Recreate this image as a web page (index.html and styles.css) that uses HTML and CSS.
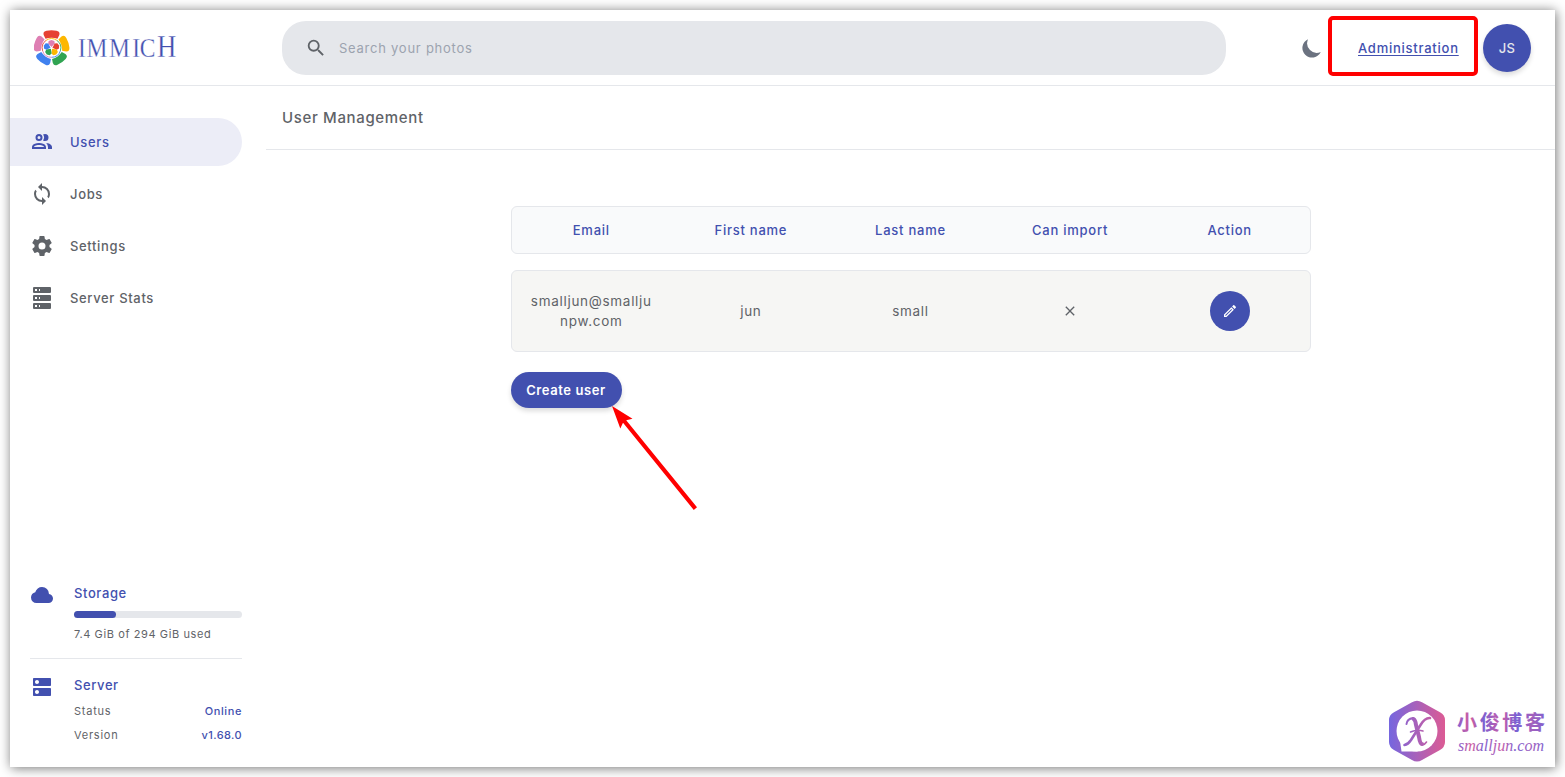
FILE: index.html
```
<!DOCTYPE html>
<html lang="en">
<head>
    <meta charset="UTF-8">
    <meta name="viewport" content="width=device-width, initial-scale=1.0">
    <title>User Management - Immich</title>
    <link rel="stylesheet" href="styles.css">
</head>
<body>
    <div class="window">
        <header class="navbar">
            <a class="brand">
                <svg class="brand-logo" viewBox="0 0 36 36">
                    <defs>
                        <path id="petal" d="M-6 -9.2 L-7.8 -13 Q-8.8 -16.4 -5 -17.2 Q0 -18.2 5 -17.2 Q8.8 -16.4 7.8 -13 L6 -9.2 Q0 -11.4 -6 -9.2Z"/>
                        <path id="bud" d="M0 -1 L-3.3 -4.4 L-2.8 -7 L0 -8 L2.8 -7 L3.3 -4.4Z"/>
                    </defs>
                    <g transform="translate(17.5 18)">
                        <use href="#petal" fill="#e64132"/>
                        <use href="#petal" fill="#fdb700" transform="rotate(72)"/>
                        <use href="#petal" fill="#31a452" transform="rotate(144)"/>
                        <use href="#petal" fill="#4081ef" transform="rotate(216)"/>
                        <use href="#petal" fill="#de7fb3" transform="rotate(288)"/>
                        <g fill="none" stroke-width="0.9">
                            <path stroke="#fdb700" d="M-5.4 -7.6A9.3 9.3 0 0 1 5.4 -7.6"/>
                            <path stroke="#31a452" d="M5.4 -7.6A9.3 9.3 0 0 1 8.9 2.8"/>
                            <path stroke="#4081ef" d="M8.9 2.8A9.3 9.3 0 0 1 0 9.3"/>
                            <path stroke="#de7fb3" d="M0 9.3A9.3 9.3 0 0 1 -8.9 2.8"/>
                            <path stroke="#e64132" d="M-8.9 2.8A9.3 9.3 0 0 1 -5.4 -7.6"/>
                        </g>
                        <use href="#bud" fill="#de7fb3"/>
                        <use href="#bud" fill="#e64132" transform="rotate(72)"/>
                        <use href="#bud" fill="#fdb700" transform="rotate(144)"/>
                        <use href="#bud" fill="#31a452" transform="rotate(216)"/>
                        <use href="#bud" fill="#4081ef" transform="rotate(288)"/>
                    </g>
                </svg>
                <svg class="brand-name" viewBox="0 0 104 36">
                    <text transform="scale(.84 1)" x="0 10 37 64.5 73.5 94" y="27">IMMIC<tspan class="brand-tall">H</tspan></text>
                </svg>
            </a>
            <div class="search">
                <svg class="search-icon" viewBox="0 0 24 24"><path d="M15.5 14h-.79l-.28-.27A6.47 6.47 0 0 0 16 9.5 6.5 6.5 0 1 0 9.5 16c1.61 0 3.09-.59 4.23-1.57l.27.28v.79l5 4.99L20.49 19l-4.99-5zm-6 0C7.01 14 5 11.99 5 9.5S7.01 5 9.5 5 14 7.01 14 9.5 11.99 14 9.5 14z"/></svg>
                <span>Search your photos</span>
            </div>
            <div class="nav-actions">
                <svg class="moon" viewBox="0 0 20 20"><path d="M17.293 13.293A8 8 0 016.707 2.707a8.001 8.001 0 1010.586 10.586z"/></svg>
                <a class="admin-link">Administration</a>
                <div class="avatar">JS</div>
            </div>
        </header>

        <div class="layout">
            <aside class="sidebar">
                <nav class="menu">
                    <a class="menu-item active">
                        <svg viewBox="0 0 24 24"><path d="M13.07 10.41A5 5 0 0 0 13.07 4.59A3.39 3.39 0 0 1 15 4A3.5 3.5 0 0 1 15 11A3.39 3.39 0 0 1 13.07 10.41M5.5 7.5A3.5 3.5 0 1 1 9 11A3.5 3.5 0 0 1 5.5 7.5M7.5 7.5A1.5 1.5 0 1 0 9 6A1.5 1.5 0 0 0 7.5 7.5M16 17V19H2V17S2 13 9 13 16 17 16 17M14 17C13.86 16.22 12.67 15 9 15S4.07 16.31 4 17M15.95 13A5.32 5.32 0 0 1 18 17V19H22V17S22 13.37 15.94 13Z"/></svg>
                        <span>Users</span>
                    </a>
                    <a class="menu-item">
                        <svg viewBox="0 0 24 24"><path d="M12 18a6 6 0 0 1-6-6c0-1 .25-1.97.7-2.8L5.24 7.74A7.93 7.93 0 0 0 4 12a8 8 0 0 0 8 8v3l4-4l-4-4m0-11V1L8 5l4 4V6a6 6 0 0 1 6 6c0 1-.25 1.97-.7 2.8l1.46 1.46A7.93 7.93 0 0 0 20 12a8 8 0 0 0-8-8Z"/></svg>
                        <span>Jobs</span>
                    </a>
                    <a class="menu-item">
                        <svg viewBox="0 0 24 24"><path d="M12 15.5A3.5 3.5 0 0 1 8.5 12A3.5 3.5 0 0 1 12 8.5a3.5 3.5 0 0 1 3.5 3.5a3.5 3.5 0 0 1-3.5 3.5m7.43-2.53c.04-.32.07-.64.07-.97c0-.33-.03-.66-.07-1l2.11-1.63c.19-.15.24-.42.12-.64l-2-3.46c-.12-.22-.39-.31-.61-.22l-2.49 1c-.52-.39-1.06-.73-1.69-.98l-.37-2.65A.506.506 0 0 0 14 2h-4c-.25 0-.46.18-.5.42l-.37 2.65c-.63.25-1.17.59-1.69.98l-2.49-1c-.22-.09-.49 0-.61.22l-2 3.46c-.13.22-.07.49.12.64L4.57 11c-.04.34-.07.67-.07 1c0 .33.03.65.07.97l-2.11 1.66c-.19.15-.25.42-.12.64l2 3.46c.12.22.39.3.61.22l2.49-1.01c.52.4 1.06.74 1.69.99l.37 2.65c.04.24.25.42.5.42h4c.25 0 .46-.18.5-.42l.37-2.65c.63-.26 1.17-.59 1.69-.99l2.49 1.01c.22.08.49 0 .61-.22l2-3.46c.12-.22.07-.49-.12-.64l-2.11-1.66Z"/></svg>
                        <span>Settings</span>
                    </a>
                    <a class="menu-item">
                        <svg viewBox="0 0 24 24"><path fill-rule="evenodd" d="M4 1h16a1 1 0 0 1 1 1v4a1 1 0 0 1-1 1H4a1 1 0 0 1-1-1V2a1 1 0 0 1 1-1m0 8h16a1 1 0 0 1 1 1v4a1 1 0 0 1-1 1H4a1 1 0 0 1-1-1v-4a1 1 0 0 1 1-1m0 8h16a1 1 0 0 1 1 1v4a1 1 0 0 1-1 1H4a1 1 0 0 1-1-1v-4a1 1 0 0 1 1-1M9 5h1V3H9v2m0 8h1v-2H9v2m0 8h1v-2H9v2M5 3v2h2V3H5m0 8v2h2v-2H5m0 8v2h2v-2H5Z"/></svg>
                        <span>Server Stats</span>
                    </a>
                </nav>

                <div class="status">
                    <div class="status-block">
                        <svg class="status-icon" viewBox="0 0 24 24"><path d="M6.5 20q-2.28 0-3.89-1.57Q1 16.85 1 14.58q0-1.95 1.17-3.48q1.18-1.53 3.08-1.95q.63-2.3 2.5-3.72Q9.63 4 12 4q2.93 0 4.96 2.04Q19 8.07 19 11q1.73.2 2.86 1.5q1.14 1.28 1.14 3q0 1.88-1.31 3.19T18.5 20Z"/></svg>
                        <div class="status-body">
                            <p class="status-title">Storage</p>
                            <div class="progress"><div class="progress-bar" style="width: 25%"></div></div>
                            <p class="small">7.4 GiB of 294 GiB used</p>
                        </div>
                    </div>
                    <hr>
                    <div class="status-block">
                        <svg class="status-icon" viewBox="0 0 24 24"><path d="M20 13H4c-.55 0-1 .45-1 1v6c0 .55.45 1 1 1h16c.55 0 1-.45 1-1v-6c0-.55-.45-1-1-1zM7 19c-1.1 0-2-.9-2-2s.9-2 2-2 2 .9 2 2-.9 2-2 2zM20 3H4c-.55 0-1 .45-1 1v6c0 .55.45 1 1 1h16c.55 0 1-.45 1-1V4c0-.55-.45-1-1-1zM7 9c-1.1 0-2-.9-2-2s.9-2 2-2 2 .9 2 2-.9 2-2 2z"/></svg>
                        <div class="status-body">
                            <p class="status-title">Server</p>
                            <div class="small status-row"><span>Status</span><strong>Online</strong></div>
                            <div class="small status-row"><span>Version</span><strong class="version">v1.68.0</strong></div>
                        </div>
                    </div>
                </div>
            </aside>

            <main class="content">
                <h1>User Management</h1>
                <section class="users">
                    <div class="table-row table-head">
                        <div>Email</div>
                        <div>First name</div>
                        <div>Last name</div>
                        <div>Can import</div>
                        <div>Action</div>
                    </div>
                    <div class="table-row table-user">
                        <div>smalljun@smallju<br>npw.com</div>
                        <div>jun</div>
                        <div>small</div>
                        <div><svg class="cross" viewBox="0 0 24 24"><path d="M19 6.41L17.59 5L12 10.59L6.41 5L5 6.41L10.59 12L5 17.59L6.41 19L12 13.41L17.59 19L19 17.59L13.41 12L19 6.41Z"/></svg></div>
                        <div>
                            <button class="edit-btn"><svg viewBox="0 0 24 24"><path d="M14.06 9L15 9.94L5.92 19H5v-.92L14.06 9m3.6-6c-.25 0-.51.1-.7.29l-1.83 1.83l3.75 3.75l1.83-1.83c.39-.39.39-1.04 0-1.41l-2.34-2.34c-.2-.2-.45-.29-.71-.29m-3.6 3.19L3 17.25V21h3.75L17.81 9.94l-3.75-3.75Z"/></svg></button>
                        </div>
                    </div>
                    <button class="create-btn">Create user</button>
                </section>
            </main>
        </div>
    </div>

    <!-- annotations -->
    <div class="highlight"></div>
    <svg class="arrow" viewBox="0 0 90 110">
        <path fill="#ff0000" d="M2 1 L22.5 13.7 L16.2 15.2 L87 102.2 L83.8 105 L13 17.8 L10.3 23.5Z"/>
    </svg>

    <svg class="watermark" viewBox="0 0 164 68">
        <defs>
            <linearGradient id="hex" gradientUnits="userSpaceOnUse" x1="1" y1="0" x2="57" y2="0"><stop offset="0" stop-color="#7566df"/><stop offset="1" stop-color="#dc5b94"/></linearGradient>
            <linearGradient id="ink"><stop offset="0" stop-color="#8061d2"/><stop offset=".15" stop-color="#d45d9d"/><stop offset=".3" stop-color="#7b61d1"/><stop offset=".5" stop-color="#c95da8"/><stop offset=".68" stop-color="#7861d4"/><stop offset=".85" stop-color="#a35fbc"/><stop offset="1" stop-color="#8061d0"/></linearGradient>
        </defs>
        <path fill="url(#hex)" d="M24 3.2Q29 .2 34 3.2L52 13.2Q57 16 57 21V43Q57 48 52 51L34 61Q29 64 24 61L6 51Q1 48 1 43V21Q1 16 6 13.2Z"/>
        <circle cx="29" cy="32" r="20.5" fill="#fff"/>
        <path fill="#fff" d="M12 42L13.5 52.5H30Z"/>
        <g fill="none" stroke="url(#hex)" stroke-linecap="round">
            <path stroke-width="2" d="M18.5 25Q19 20 25 19"/>
            <path stroke-width="4" d="M25.5 20Q27.500 21 28 26L31 38Q32 45 34 45"/>
            <path stroke-width="1.6" d="M34 46Q37 45.500 38.500 43"/>
            <path stroke-width="2.6" d="M42 19Q37 18.500 32.500 26L23 41Q20 45.500 16.5 46"/>
            <path stroke-width="1.6" d="M22.5 33Q29 30 35 32"/>
        </g>
        <text class="watermark-cn" x="69" y="31" fill="url(#ink)" textLength="88">小俊博客</text>
        <text class="watermark-url" x="70" y="52" fill="url(#ink)" textLength="86" lengthAdjust="spacingAndGlyphs">smalljun.com</text>
    </svg>
</body>
</html>
```
FILE: styles.css
```
* {
    box-sizing: border-box;
}
body {
    margin: 0;
    padding: 10px;
    height: 777px;
    overflow: hidden;
    background-color: #fff;
    color: #5f6368;
    font-family: Inter, "Liberation Sans", sans-serif;
    font-size: 13px;
    letter-spacing: 0.75px;
    line-height: 20px;
}
p, h1 {
    margin: 0;
}
svg {
    display: block;
    fill: currentColor;
    flex-shrink: 0;
}
button {
    border: none;
    padding: 0;
    font: inherit;
    letter-spacing: inherit;
    color: white;
    background-color: #4250af;
}
.window {
    display: flex;
    flex-direction: column;
    width: 1545px;
    height: 757px;
    background-color: white;
    box-shadow: 1px 1px 11px 0 rgba(0,0,0,0.55);
}
.navbar {
    display: flex;
    align-items: center;
    height: 76px;
    padding: 0 24px;
    border-bottom: 1px solid #e5e7eb;
}
.brand {
    display: flex;
    gap: 8px;
    width: 248px;
    color: #4250af;
}
.brand-logo {
    width: 36px;
    height: 36px;
}
.brand-name {
    width: 104px;
    height: 36px;
    font-family: "Liberation Serif", serif;
    font-size: 28px;
    letter-spacing: 0;
    stroke: white;
    stroke-width: 0.3px;
}
.brand-tall {
    font-size: 32px;
}
.search {
    display: flex;
    align-items: center;
    gap: 12px;
    width: 944px;
    height: 54px;
    padding-left: 23px;
    border-radius: 24px;
    background-color: #e5e7eb;
    color: #9ca3af;
}
.search-icon {
    width: 22px;
    height: 22px;
    color: #5f6368;
}
.nav-actions {
    display: flex;
    align-items: center;
    margin-left: auto;
}
.moon {
    width: 24px;
    height: 24px;
    margin-right: 34px;
    color: #6b7280;
}
.admin-link {
    width: 101px;
    margin-right: 24px;
    color: #4250af;
    font-weight: 500;
    text-decoration: underline;
    text-underline-offset: 2px;
    white-space: nowrap;
}
.avatar {
    width: 48px;
    height: 48px;
    border-radius: 50%;
    background-color: #4250af;
    color: #e5e7eb;
    font-weight: 500;
    letter-spacing: 0.4px;
    line-height: 49px;
    text-align: center;
    box-shadow: 0 3px 5px rgba(0,0,0,0.14);
}
.layout {
    display: flex;
    flex: 1;
}
.sidebar {
    display: flex;
    flex-direction: column;
    justify-content: space-between;
    width: 256px;
    padding: 32px 24px 24px 0;
}
.menu {
    display: flex;
    flex-direction: column;
    gap: 4px;
}
.menu-item {
    display: flex;
    align-items: center;
    gap: 16px;
    height: 48px;
    padding-left: 20px;
    border-radius: 0 24px 24px 0;
    font-weight: 500;
    letter-spacing: 0.65px;
}
.menu-item svg {
    width: 24px;
    height: 24px;
}
.menu-item.active {
    background-color: #ecedf7;
    color: #4250af;
}
.status {
    padding-left: 20px;
}
.status-block {
    display: flex;
    gap: 20px;
}
.status-icon {
    width: 24px;
    height: 24px;
    color: #4250af;
}
.status-body {
    flex: 1;
}
.status-title {
    color: #4250af;
    font-weight: 500;
    letter-spacing: 0.6px;
}
.progress {
    height: 7px;
    margin: 8px 0;
    border-radius: 4px;
    background-color: #e5e7eb;
}
.progress-bar {
    height: 7px;
    border-radius: 4px;
    background-color: #4250af;
}
.small {
    font-size: 11px;
    line-height: 16px;
    letter-spacing: 0.6px;
}
.status hr {
    margin: 16px 0;
    border: none;
    border-top: 1px solid #e5e7eb;
}
.status-row {
    display: flex;
    justify-content: space-between;
    margin-top: 8px;
}
.status-row span {
    letter-spacing: 0.75px;
}
.status-row strong {
    color: #4250af;
    font-weight: 500;
}
.status-row .version {
    letter-spacing: 0.4px;
}
.content {
    flex: 1;
}
h1 {
    height: 64px;
    padding: 22px 16px;
    border-bottom: 1px solid #e5e7eb;
    font-size: 15px;
    font-weight: 500;
    letter-spacing: 0.65px;
}
.users {
    width: 800px;
    margin: 56px auto 0;
}
.table-row {
    display: grid;
    grid-template-columns: repeat(5, 1fr);
    align-items: center;
    justify-items: center;
    border: 1px solid #e5e7eb;
    border-radius: 6px;
    text-align: center;
}
.table-head {
    height: 48px;
    margin-bottom: 16px;
    background-color: #f9fafb;
    color: #4250af;
    font-weight: 500;
}
.table-user {
    height: 82px;
    margin-bottom: 20px;
    background-color: #f6f6f4;
    font-size: 13.5px;
    letter-spacing: 0.7px;
}
.cross {
    width: 16px;
    height: 16px;
}
.edit-btn {
    display: grid;
    place-items: center;
    width: 40px;
    height: 40px;
    border-radius: 50%;
}
.edit-btn svg {
    width: 16px;
    height: 16px;
}
.create-btn {
    width: 111px;
    height: 36px;
    border-radius: 18px;
    font-weight: 600;
    letter-spacing: 0.6px;
    box-shadow: 0 3px 5px rgba(0,0,0,0.14);
}
.highlight {
    position: absolute;
    left: 1328px;
    top: 16px;
    width: 150px;
    height: 60px;
    border: 4px solid #ff0000;
    border-radius: 5px;
}
.arrow {
    position: absolute;
    left: 610px;
    top: 405px;
    width: 90px;
    height: 110px;
}
.watermark {
    position: absolute;
    left: 1388px;
    top: 699px;
    width: 164px;
    height: 68px;
    letter-spacing: 0;
}
.watermark-cn {
    font: 700 20px "Noto Sans CJK SC", sans-serif;
}
.watermark-url {
    font: italic 17px "Liberation Serif", serif;
}
```
